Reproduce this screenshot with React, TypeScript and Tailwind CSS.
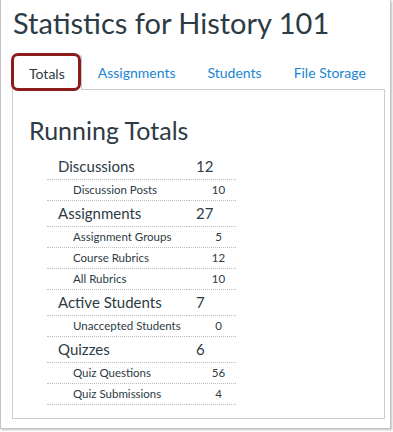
import React from 'react';

type Row = { label: string; value: string; sub?: boolean };

const rows: Row[] = [
  { label: 'Discussions', value: '12' },
  { label: 'Discussion Posts', value: '10', sub: true },
  { label: 'Assignments', value: '27' },
  { label: 'Assignment Groups', value: '5', sub: true },
  { label: 'Course Rubrics', value: '12', sub: true },
  { label: 'All Rubrics', value: '10', sub: true },
  { label: 'Active Students', value: '7' },
  { label: 'Unaccepted Students', value: '0', sub: true },
  { label: 'Quizzes', value: '6' },
  { label: 'Quiz Questions', value: '56', sub: true },
  { label: 'Quiz Submissions', value: '4', sub: true },
];

const tabs = ['Totals', 'Assignments', 'Students', 'File Storage'];

export default function App() {
  return (
    <div className="h-[432px] w-[393px] bg-white font-['Lato','Liberation_Sans',sans-serif] text-[#2d3b45]">
      <div className="h-[429px] w-[391px] border-x border-b border-[#c4c4c4] pl-[11px] pr-[5px] shadow-[1px_1px_2px_rgba(0,0,0,0.25)]">
        <h1 className="pl-[1px] pt-[3px] text-[29px] leading-[40px]">Statistics for History 101</h1>

        <div className="mt-[12px] flex h-[34px]">
          {tabs.map((tab, index) => (
            <div
              className={`relative flex items-center px-4 text-[14px] ${
                index === 0 ? 'z-10 -mb-px h-[35px] rounded-t-[3px] border border-b-0 border-[#c7cdd1] bg-white text-[#2d3b45]' : 'text-[#1a85d2]'
              }`}
              key={tab}
            >
              {tab}
              {index === 0 && (
                <span className="absolute -left-[2px] -top-[3px] h-[38px] w-[70px] rounded-[7px] border-[3px] border-[#8c1c1c]" />
              )}
            </div>
          ))}
        </div>

        <section className="h-[330px] border border-[#c7cdd1] px-4 pt-[22px]">
          <h2 className="text-[25px] leading-[36px]">Running Totals</h2>
          <table className="ml-[18px] mt-[5px] border-collapse">
            <tbody>
              {rows.map((row) => (
                <tr className={row.sub ? 'h-[21px]' : 'h-[26px]'} key={row.label}>
                  <td
                    className={`w-[142px] border-b border-dotted border-[#b8bec2] ${
                      row.sub ? 'pl-[26px] pt-[1px] text-[11.5px]' : 'pl-[11px] pt-[1px] text-[15px]'
                    }`}
                  >
                    {row.label}
                  </td>
                  <td
                    className={`w-[47px] border-b border-dotted border-[#b8bec2] ${
                      row.sub ? 'pl-[12px] text-center text-[11.5px]' : 'pl-[7px] text-[15px]'
                    }`}
                  >
                    {row.value}
                  </td>
                </tr>
              ))}
            </tbody>
          </table>
        </section>
      </div>
    </div>
  );
}
